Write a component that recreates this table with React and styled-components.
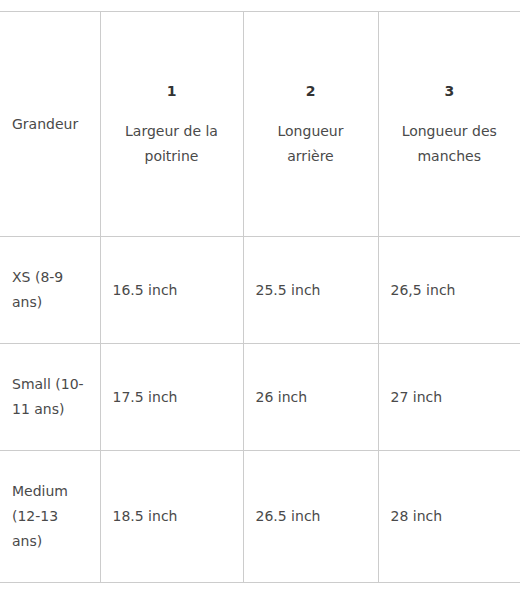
import React from "react";
import styled, { createGlobalStyle } from "styled-components";

const GlobalStyle = createGlobalStyle`
  body {
    margin: 0;
    background: #fff;
    font-family: "DejaVu Sans", "Open Sans", sans-serif;
  }
`;

const Wrapper = styled.div`
  padding-top: 11px;
  width: 520px;
`;

const Table = styled.table`
  width: 520px;
  table-layout: fixed;
  border-collapse: collapse;
  font-size: 14px;
  line-height: 25px;
  color: #4a4a4a;
`;

const Col = styled.col`
  width: ${(props) => props.w}px;
`;

const Th = styled.th`
  height: 224px;
  padding: 0 12px;
  font-weight: 400;
  text-align: ${(props) => (props.left ? "left" : "center")};
  vertical-align: middle;
  border-top: 1px solid #ccc;
  border-bottom: 1px solid #ccc;
  border-left: ${(props) => (props.first ? "none" : "1px solid #ccc")};
`;

const Num = styled.div`
  font-weight: 700;
  color: #333;
  margin-bottom: 15px;
`;

const Td = styled.td`
  padding: 28px 12px;
  text-align: left;
  vertical-align: middle;
  border-bottom: 1px solid #ccc;
  border-left: ${(props) => (props.first ? "none" : "1px solid #ccc")};
`;

const widths = [100, 143, 135, 142];

const headers = [
  { n: "1", label: "Largeur de la poitrine" },
  { n: "2", label: "Longueur arrière" },
  { n: "3", label: "Longueur des manches" },
];

const rows = [
  ["XS (8-9 ans)", "16.5 inch", "25.5 inch", "26,5 inch"],
  ["Small (10-11 ans)", "17.5 inch", "26 inch", "27 inch"],
  ["Medium (12-13 ans)", "18.5 inch", "26.5 inch", "28 inch"],
];

export default function App() {
  return (
    <Wrapper>
      <GlobalStyle />
      <Table>
        <colgroup>
          {widths.map((w, i) => (
            <Col key={i} w={w} />
          ))}
        </colgroup>
        <thead>
          <tr>
            <Th first left>Grandeur</Th>
            {headers.map((h) => (
              <Th key={h.n}>
                <Num>{h.n}</Num>
                {h.label}
              </Th>
            ))}
          </tr>
        </thead>
        <tbody>
          {rows.map((r, i) => (
            <tr key={i}>
              {r.map((c, j) => (
                <Td key={j} first={j === 0}>{c}</Td>
              ))}
            </tr>
          ))}
        </tbody>
      </Table>
    </Wrapper>
  );
}
